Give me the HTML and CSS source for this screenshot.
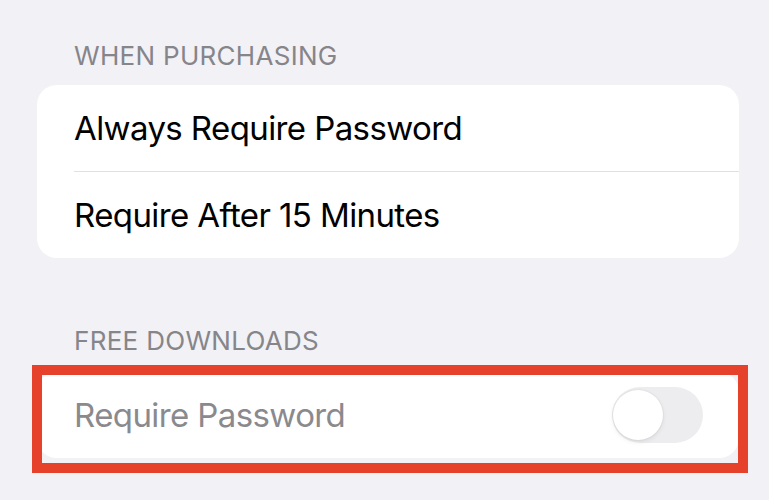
FILE: index.html
```html
<!DOCTYPE html>
<html lang="en">
<head>
<meta charset="utf-8">
<title>Password Settings</title>
<link rel="stylesheet" href="styles.css">
</head>
<body>
<div class="screen">
  <div class="section-header first">WHEN PURCHASING</div>
  <div class="card">
    <div class="row">Always Require Password</div>
    <div class="sep"></div>
    <div class="row">Require After 15 Minutes</div>
  </div>

  <div class="section-header second">FREE DOWNLOADS</div>
  <div class="card highlighted">
    <div class="row between">
      <span class="disabled">Require Password</span>
      <span class="toggle"><span class="knob"></span></span>
    </div>
    <div class="highlight"></div>
  </div>
</div>
</body>
</html>
```

FILE: styles.css
```css
html, body {
  margin: 0;
  padding: 0;
  background: #f2f1f6;
}
body {
  font-family: Inter, "Noto Sans", "Liberation Sans", sans-serif;
  width: 769px;
  height: 500px;
  overflow: hidden;
}
.screen {
  padding: 40px 30px 0 37px;
}
.section-header {
  padding-left: 37px;
  font-size: 26px;
  line-height: 32px;
  color: #85858a;
  letter-spacing: 0.3px;
}
.section-header.first {
  margin-bottom: 13px;
}
.section-header.second {
  margin-top: 67px;
  margin-bottom: 15px;
}
.card {
  background: #ffffff;
  border-radius: 20px;
  position: relative;
}
.row {
  height: 86px;
  display: flex;
  align-items: center;
  padding: 0 36px 0 37px;
  font-size: 33px;
  color: #000000;
  letter-spacing: -0.6px;
}
.row.between {
  justify-content: space-between;
}
.sep {
  height: 1px;
  margin-left: 37px;
  background: #e1e0e5;
}
.disabled {
  color: #8a8a8e;
}
.toggle {
  width: 91px;
  height: 56px;
  border-radius: 28px;
  background: #ededef;
  position: relative;
  display: block;
}
.knob {
  position: absolute;
  left: 1px;
  top: 3px;
  width: 50px;
  height: 50px;
  border-radius: 50%;
  background: #ffffff;
  box-shadow: 0 2px 5px rgba(0, 0, 0, 0.08), 0 0 0 1px rgba(0, 0, 0, 0.03);
}
.highlight {
  position: absolute;
  left: -5px;
  right: -9px;
  top: -7px;
  bottom: -15px;
  border: 10px solid #e5412b;
  pointer-events: none;
}
```
